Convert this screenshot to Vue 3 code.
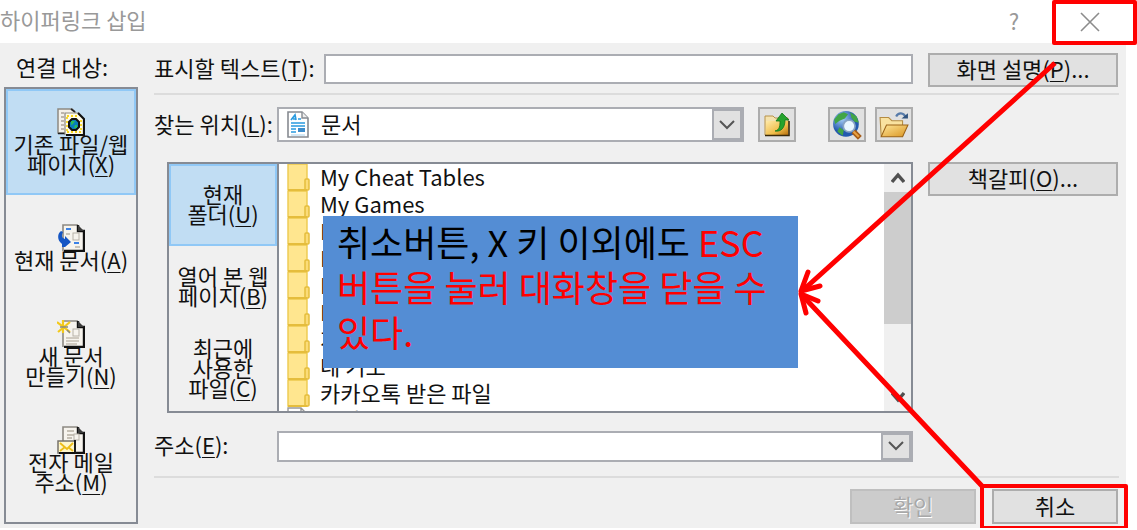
<script setup>
import { ref } from 'vue'

const targets = [
  { icon: 'web', lines: ['기존 파일/웹', '페이지'], key: 'X' },
  { icon: 'place', lines: ['현재 문서'], key: 'A' },
  { icon: 'create', lines: ['새 문서', '만들기'], key: 'N' },
  { icon: 'mail', lines: ['전자 메일', '주소'], key: 'M' },
]
const sources = [
  { lines: ['현재', '폴더'], key: 'U' },
  { lines: ['열어 본 웹', '페이지'], key: 'B' },
  { lines: ['최근에', '사용한', '파일'], key: 'C' },
]
const files = ['My Cheat Tables', 'My Games', 'My Music', 'My Pictures', 'Reports', 'Release', '개인', '네 기모', '카카오톡 받은 파일']
const target = ref(0)
const source = ref(0)
const display = ref('')
const address = ref('')
</script>

<template>
  <main class="stage">
    <section class="dialog" aria-label="하이퍼링크 삽입">
      <header class="titlebar">
        <h1>하이퍼링크 삽입</h1>
        <button class="help" type="button">?</button>
        <button class="close" type="button" aria-label="닫기">
          <svg width="20" height="20" viewBox="0 0 20 20"><path d="M1 1 19 19M19 1 1 19" stroke="#8c8c8c" stroke-width="1.6" /></svg>
        </button>
      </header>

      <div class="body">
        <nav class="side">
          <h2>연결 대상:</h2>
          <div class="targets">
            <button v-for="(t, i) in targets" :key="t.key" type="button" :class="{ on: target === i }" @click="target = i">
              <svg width="28" height="28" viewBox="0 0 28 28">
                <template v-if="t.icon === 'web'">
                  <path d="M1 1H15L18 4V25H1Z" fill="#f4f1ea" stroke="#8d8982" stroke-width="1.5" />
                  <path d="M4 5H7M4 9H7M4 13H7M4 17H7M4 21H7" stroke="#aaa398" stroke-width="1.4" fill="none" />
                  <path d="M1 25.500H8M14 1 18 4" stroke="#222" stroke-width="1.6" />
                  <path d="M8 5H22L26 10V27H8Z" fill="#fffbe6" />
                  <path d="M8 27V5H22" fill="none" stroke="#8d8982" stroke-width="1.2" />
                  <path d="M21 5 27 11V27H9" fill="none" stroke="#111" stroke-width="2.2" />
                  <path d="M10 8H21M10 24H24M10 9V24M24 12V24" fill="none" stroke="#f8d51c" stroke-width="1.8" stroke-dasharray="2 2" />
                  <path d="M15 11H19L22 14V19L19 22H15L12 19V14Z" fill="#087fbd" stroke="#111" stroke-width="2" />
                  <path d="M14 13H18L16 16 14 17ZM18 17H20V20H17Z" fill="#2cbc58" />
                </template>
                <template v-else>
                  <path d="M6 1H21L27 7V27H6Z" fill="#f7f4ee" />
                  <path d="M6 27V1H21" fill="none" stroke="#8d8982" stroke-width="1.6" />
                  <path d="M21 1V7H27V27H7" fill="none" stroke="#111" stroke-width="2.4" />
                  <path d="M21 1 27 7H21Z" fill="#3c3c3c" />
                </template>
                <template v-if="t.icon === 'place'">
                  <path d="M9 5H14M17 19H22" stroke="#3c82e6" stroke-width="2" />
                  <path d="M9 10H13M18 23H23" stroke="#bbb4a9" stroke-width="1.5" />
                  <rect x="16" y="9" width="6" height="7" fill="#f7f4ee" stroke="#b8b2a8" />
                  <path d="M4 7C1 9 0 14 3 18L5 20V23H8L14 18 8 12V15C5 14 4 12 6 8Z" fill="#1656c4" />
                </template>
                <template v-if="t.icon === 'create'">
                  <rect x="16" y="9" width="6" height="7" fill="#f7f4ee" stroke="#b8b2a8" />
                  <path d="M9 18H22M9 21H22M9 24H20" stroke="#c3bcb1" stroke-width="1.3" />
                  <path d="M6 0V13M0 2 13 12M13 2 1 12" stroke="#f3c91b" stroke-width="2.2" />
                  <path d="M3 7H11M10 10 13 13" stroke="#8b8a80" stroke-width="1.5" />
                </template>
                <template v-if="t.icon === 'mail'">
                  <path d="M10 5H17M10 9H17M10 12H15" stroke="#b8b0a4" stroke-width="1.3" />
                  <rect x="17" y="8" width="5" height="6" fill="#f7f4ee" stroke="#b8b2a8" />
                  <rect x="1" y="15" width="17" height="12" fill="#fff7cd" stroke="#77736b" stroke-width="1.5" />
                  <path d="M18 14V27H2" fill="none" stroke="#111" stroke-width="1.8" />
                  <path d="M3 17 10 23 16 17M3 25 8 21M16 25 11 21" fill="none" stroke="#edbd18" stroke-width="1.8" />
                </template>
              </svg>
              <span v-for="(line, n) in t.lines" :key="n">{{ line }}<template v-if="n === t.lines.length - 1">(<u>{{ t.key }}</u>)</template></span>
            </button>
          </div>
        </nav>

        <form class="main" @submit.prevent>
          <div class="row top">
            <div class="field">
              <label class="wide" for="display">표시할 텍스트(<u>T</u>):</label>
              <input id="display" v-model="display" class="box" type="text" />
            </div>
            <button class="push" type="button">화면 설명(<u>P</u>)...</button>
          </div>
          <hr />
          <div class="row look">
            <div class="field">
              <label for="place">찾는 위치(<u>L</u>):</label>
              <div class="combo">
                <svg class="doc" width="22" height="27" viewBox="0 0 22 27">
                  <path d="M1 1H15L21 7V26H1Z" fill="#fff" stroke="#878b91" stroke-width="1.6" />
                  <path d="M15 1V7H21" fill="#eee" stroke="#878b91" stroke-width="1.4" />
                  <path d="M4 9 8 4 9 9M6 8H9M11 8H14M4 12H18M4 15H18M4 18H9M4 21H9" fill="none" stroke="#2a9be0" stroke-width="1.7" />
                  <path d="M11 17H18V21H11Z" fill="#3d8dcc" />
                  <path d="M4 24H18" stroke="#a9d2ed" />
                </svg>
                <select id="place"><option>문서</option></select>
                <span class="drop"><svg width="16" height="10" viewBox="0 0 16 10"><path d="M1 1 8 8 15 1" fill="none" stroke="#555" stroke-width="2" /></svg></span>
              </div>
              <button class="tool up" type="button" aria-label="상위 폴더">
                <svg width="28" height="26" viewBox="0 0 28 26">
                  <defs><linearGradient id="gold" x2="1" y2="1"><stop stop-color="#ffeaa8" /><stop offset=".6" stop-color="#f0bd4a" /><stop offset="1" stop-color="#b8700c" /></linearGradient></defs>
                  <path d="M2 4H10L12 6H25V23H2Z" fill="#f5e2ad" stroke="#b7924a" />
                  <path d="M3 9H25V23H3Z" fill="url(#gold)" /><path d="M2 23.500H26V9" fill="none" stroke="#3a2a0a" stroke-width="1.6" />
                  <path d="M12 19C17 18 17 13 17 9H13L19 1 26 8H22C22 16 18 20 12 19Z" fill="#25a32c" stroke="#127519" stroke-width="0.8" />
                </svg>
              </button>
              <button class="tool" type="button" aria-label="웹 찾아보기">
                <svg width="30" height="30" viewBox="0 0 28 28">
                  <defs><radialGradient id="sea" cx=".35" cy=".3"><stop stop-color="#a9cff6" /><stop offset="1" stop-color="#245aaf" /></radialGradient></defs>
                  <circle cx="13" cy="13" r="12" fill="url(#sea)" />
                  <path d="M6 4 11 2 15 4 12 8 7 10 3 13 2 9ZM17 2 23 6 25 12 21 11 18 7ZM7 16 11 19 10 24 5 20Z" fill="#42a546" />
                  <path d="m20 20 6 6" stroke="#a65b17" stroke-width="5" /><path d="m20 20 5 5" stroke="#e9a143" stroke-width="2" />
                  <circle cx="16" cy="15" r="5.5" fill="#e9f6ff" stroke="#89a4c5" stroke-width="1.6" />
                </svg>
              </button>
              <button class="tool" type="button" aria-label="파일 찾아보기">
                <svg width="30" height="28" viewBox="0 0 28 26">
                  <defs><linearGradient id="gold2" x2="1" y2="1"><stop stop-color="#ffe79a" /><stop offset="1" stop-color="#d99420" /></linearGradient></defs>
                  <path d="M1 6H9L12 9H22V23H2Z" fill="#f9e2a0" stroke="#b58c42" />
                  <path d="M7 13H27L22 24H2Z" fill="url(#gold2)" stroke="#9b6419" />
                  <path d="M16 5C18 1 23 1 25 6" fill="none" stroke="#587caa" stroke-width="2" /><path d="M21 7H27V2Z" fill="#31547f" />
                </svg>
              </button>
            </div>
          </div>

          <div class="row browse">
            <div class="browser">
              <nav class="sources">
                <button v-for="(s, i) in sources" :key="s.key" type="button" :class="{ on: source === i }" @click="source = i">
                  <span v-for="(line, n) in s.lines" :key="n">{{ line }}<template v-if="n === s.lines.length - 1">(<u>{{ s.key }}</u>)</template></span>
                </button>
              </nav>
              <ul class="files">
                <li v-for="f in files" :key="f">
                  <svg width="24" height="27" viewBox="0 0 24 27">
                    <path d="M1 0H20V26H1Z" fill="#ffe68f" stroke="#edc94d" stroke-width="1.4" />
                    <rect x="18" y="15" width="4" height="11" rx="1" fill="#fbdc78" stroke="#e5bd3c" stroke-width="1.5" />
                    <path d="M1 26H20" stroke="#e5bd3c" stroke-width="2" />
                  </svg>
                  <span>{{ f }}</span>
                </li>
                <li>
                  <svg width="24" height="27" viewBox="0 0 24 27"><path d="M1 1H14L20 7V26H1ZM14 1V7H20" fill="#fff" stroke="#999" stroke-width="1.4" /></svg>
                  <span>그림</span>
                </li>
              </ul>
              <div class="scroll" aria-hidden="true">
                <span class="arrow"><svg width="14" height="12" viewBox="0 0 14 12"><path d="M1 10 7 3 13 10" fill="none" stroke="#505050" stroke-width="3.4" /></svg></span>
                <span class="track"><span class="thumb"></span></span>
                <span class="arrow"><svg width="14" height="12" viewBox="0 0 14 12"><path d="M1 2 7 9 13 2" fill="none" stroke="#505050" stroke-width="3.4" /></svg></span>
              </div>
            </div>
            <button class="push" type="button">책갈피(<u>O</u>)...</button>
          </div>

          <div class="row address">
            <div class="field">
              <label for="address">주소(<u>E</u>):</label>
              <div class="combo">
                <input id="address" v-model="address" type="text" />
                <button class="drop" type="button" aria-label="주소 목록"><svg width="16" height="10" viewBox="0 0 16 10"><path d="M1 1 8 8 15 1" fill="none" stroke="#555" stroke-width="2" /></svg></button>
              </div>
            </div>
          </div>
          <hr />
          <footer>
            <button class="push" type="submit" disabled>확인</button>
            <button class="push" type="button">취소</button>
          </footer>
        </form>
      </div>
    </section>

    <p class="callout">취소버튼, X 키 이외에도 <em>ESC 버튼을 눌러 대화창을 닫을 수 있다.</em></p>
    <svg class="marks" width="1137" height="530" viewBox="0 0 1137 530" aria-hidden="true">
      <g fill="none" stroke="#f00" stroke-width="4" stroke-linejoin="round">
        <rect x="1054" y="2" width="81" height="41" />
        <rect x="982" y="486" width="144" height="42" />
        <path d="M1055 63 801 292M982 486 801 294" stroke-width="5" />
        <path d="M808 272 801 291 820 286M806 313 801 294 818 301" stroke-width="5" stroke-linecap="round" />
      </g>
    </svg>
  </main>
</template>

<style>
body { background: #fff; }
</style>

<style scoped>
* { box-sizing: border-box; }
.stage { position: relative; font: 22px/28px "Noto Sans CJK KR", "Noto Sans", sans-serif; color: #111; }
button, input, select { font: inherit; color: inherit; margin: 0; border-radius: 0; }
u { text-underline-offset: 3px; text-decoration-thickness: 1px; }
.titlebar { display: flex; align-items: center; height: 43px; padding-right: 36px; color: #999; }
h1 { flex: 1; margin: 0; padding-bottom: 6px; font-size: 22px; font-weight: 400; }
.titlebar button { display: grid; place-items: center; padding: 0; background: none; border: 0; }
.titlebar .help { width: 20px; padding-bottom: 4px; }
.close { width: 22px; margin-left: 55px; }
.body { display: grid; grid-template-columns: 134px minmax(0, 1fr); gap: 16px; margin-right: 11px; padding: 10px 7px 4px 4px; background: #f0f0f0; }
h2 { margin: 0 0 8px 12px; font-size: 22px; font-weight: 400; line-height: 26px; }
.targets { height: 437px; border: 2px solid #868b94; }
.targets button, .sources button { display: flex; flex-direction: column; align-items: center; justify-content: center; width: 100%; padding: 0 0 4px; border: 2px solid transparent; background: none; line-height: 20px; white-space: nowrap; }
.targets button { height: 106px; }
.targets svg { flex: none; margin-bottom: -3px; }
.targets .on, .sources .on { background: #c1ddf3; border-color: #90c8f6; }
.main { min-width: 0; }
.row { display: grid; grid-template-columns: minmax(0, 1fr) 190px; gap: 15px; align-items: start; padding-right: 1px; }
.field { display: flex; align-items: center; }
.field label { width: 123px; flex: none; padding-bottom: 4px; white-space: nowrap; }
.field .wide { width: 170px; }
.box { flex: 1; min-width: 0; height: 30px; border: 2px solid #abadb3; background: #fff; }
.push { height: 34px; padding: 0 0 4px; background: #e1e1e1; border: 2px solid #adadad; line-height: 26px; }
.push:disabled { color: #a8a8a8; background: #ccc; border-color: #bfbfbf; text-shadow: 1px 1px #fff; }
hr { height: 2px; margin: 0; border: 0; background: #dcdcdc; }
.top { height: 40px; }
.look { padding-top: 12px; }
.combo { display: flex; flex: 1; min-width: 0; height: 35px; align-items: stretch; border: 2px solid #abadb3; background: #fff; }
.doc { align-self: center; margin-left: 8px; flex: none; }
.combo select, .combo input { flex: 1; min-width: 0; padding: 0 12px 4px; border: 0; background: none; appearance: none; }
.drop { display: grid; place-items: center; width: 30px; padding: 0; border: 2px solid #abadb3; background: #e1e1e1; }
.tool { display: grid; place-items: center; width: 38px; height: 35px; margin-left: 9px; padding: 0; border: 2px solid #adadad; background: #e1e1e1; }
.tool.up { margin: 0 23px 0 14px; }
.browse { padding-top: 20px; }
.browser { display: flex; height: 251px; margin-left: 13px; border: 2px solid #868b94; background: #fff; }
.sources { width: 110px; border-right: 2px solid #868b94; background: #f0f0f0; }
.sources button { height: 82px; }
.files { flex: 1; min-width: 0; margin: 0; padding: 0 0 0 8px; overflow: hidden; list-style: none; }
.files li { display: flex; gap: 9px; height: 27px; line-height: 24px; white-space: nowrap; }
.scroll { display: flex; flex-direction: column; width: 27px; background: #f0f0f0; }
.arrow { display: grid; place-items: center; height: 28px; }
.track { flex: 1; }
.thumb { display: block; height: 69%; background: #cdcdcd; }
.address { padding-top: 17px; padding-bottom: 14px; }
.address .combo { height: 31px; }
footer { display: flex; justify-content: flex-end; gap: 16px; padding: 11px 1px 0 0; }
footer .push { width: 126px; height: 35px; }
.callout { position: absolute; left: 323px; top: 216px; width: 475px; height: 152px; margin: 0; padding: 3px 14px; background: #548dd4; color: #000; font-size: 36px; line-height: 45px; word-break: keep-all; }
.callout em { color: #f00; font-style: normal; }
.marks { position: absolute; left: 0; top: 0; }
</style>
